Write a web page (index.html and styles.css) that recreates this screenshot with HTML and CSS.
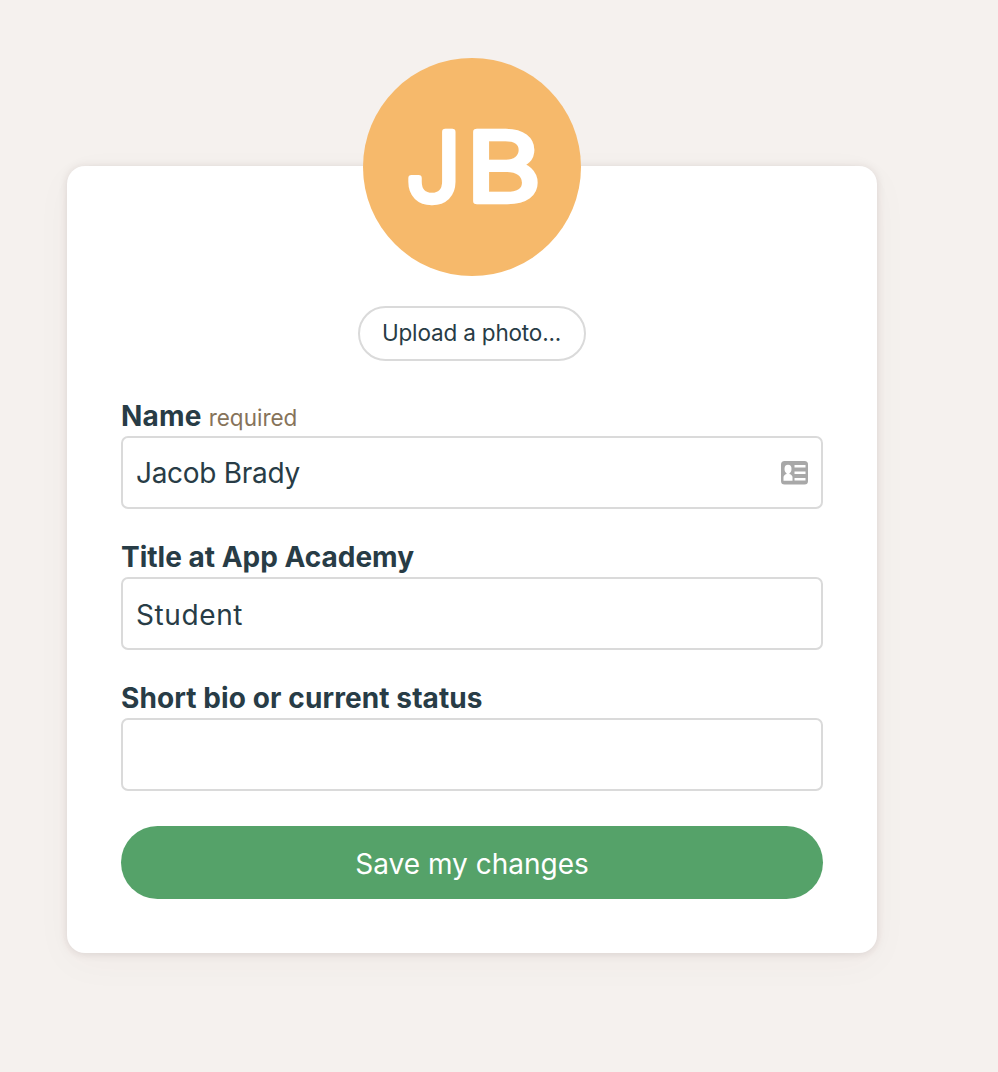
FILE: index.html
```html
<!DOCTYPE html>
<html lang="en">
<head>
<meta charset="utf-8">
<title>Edit profile</title>
<link rel="stylesheet" href="styles.css">
</head>
<body>
<main class="card">
  <div class="avatar">
    <svg class="initials" viewBox="0 0 218 218" role="img" aria-label="JB"><text x="43" y="143" textLength="55" lengthAdjust="spacingAndGlyphs">J</text><text x="103" y="143" textLength="75" lengthAdjust="spacingAndGlyphs">B</text></svg>
  </div>
  <button class="upload" type="button"><span>Upload a photo...</span></button>
  <form class="form">
    <div class="field">
      <label class="label" for="name"><span class="l-name">Name</span> <span class="required">required</span></label>
      <div class="input"><input id="name" class="control c-name" value="Jacob Brady">
        <svg class="contact" viewBox="0 0 27 24"><rect width="27" height="23.500" rx="3.500" fill="#a8a8a8"/><g fill="#fff"><ellipse cx="7" cy="8" rx="3.500" ry="4.200"/><path d="M2.500 19.800v-3.300q0-2.500 3-3.500V11h3v2q3 1 3 3.500v3.300zM13.500 4h11v2.500h-11zM13.500 10.500h11V13h-11zM13.500 17h11v2.500h-11z"/></g></svg>
      </div>
    </div>
    <div class="field">
      <label class="label" for="title"><span class="l-title">Title at App Academy</span></label>
      <div class="input"><input id="title" class="control c-title" value="Student"></div>
    </div>
    <div class="field">
      <label class="label" for="bio"><span class="l-bio">Short bio or current status</span></label>
      <div class="input"><input id="bio" class="control"></div>
    </div>
    <button class="save" type="button"><span>Save my changes</span></button>
  </form>
</main>
</body>
</html>
```
FILE: styles.css
```css
* { box-sizing: border-box; }
body { margin: 0; min-height: 1072px; padding: 166px 0 0 67px; background: #f5f1ee; color: #283c46; font-family: Inter, sans-serif; }
.card { width: 810px; height: 787px; padding: 0 54px; border-radius: 18px; background: #fff; box-shadow: 0 1px 8px rgba(60,30,30,.13), 0 10px 40px rgba(80,40,30,.03); display: flex; flex-direction: column; align-items: center; }
.avatar { flex: none; width: 218px; height: 218px; margin-top: -108px; border-radius: 50%; background: #f6b96b; }
.initials { display: block; width: 218px; height: 218px; fill: #fff; stroke: #fff; stroke-width: 6.500px; stroke-linejoin: round; font: 300 95px Inter, sans-serif; }
.upload { flex: none; width: 228px; height: 55px; margin-top: 30px; padding: 0 1px 0 0; border: 2px solid #dadada; border-radius: 28px; background: #fff; color: #283c46; font: 400 22.500px/1 Inter, sans-serif; letter-spacing: -.17px; white-space: nowrap; }
.form { width: 702px; margin-top: 39px; }
.field { height: 141px; }
.label { display: flex; align-items: baseline; gap: 7px; height: 36px; line-height: 32px; font-size: 28px; font-weight: 700; white-space: nowrap; }
.l-name { letter-spacing: .2px; }
.l-bio { letter-spacing: .1px; }
.required { font-size: 22.500px; font-weight: 400; color: #86735a; }
.input { display: flex; align-items: center; height: 73px; padding: 0 13px; border: 2px solid #dadada; border-radius: 7px; background: #fff; }
.control { flex: 1; min-width: 0; padding: 0; border: 0; outline: 0; background: none; color: #283c46; font: 400 28px Inter, sans-serif; }
.c-name { letter-spacing: -.3px; }
.c-title { padding-top: 2px; letter-spacing: .6px; }
.contact { width: 27px; height: 24px; }
.save { display: block; width: 702px; height: 73px; margin-top: 3px; padding: 3px 0 0; border: 0; border-radius: 37px; background: #55a269; color: #fff; font: 400 28px Inter, sans-serif; }
```
